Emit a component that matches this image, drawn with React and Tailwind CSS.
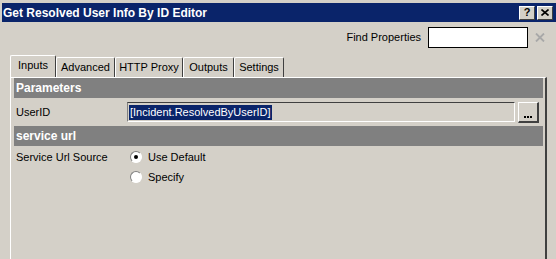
const TitleBtn = ({ children }) => (
  <div className="w-[16px] h-[14px] bg-[#d4d0c8] border-t border-l border-t-white border-l-white border-r border-b border-r-[#404040] border-b-[#404040] flex items-center justify-center text-[11px] font-bold leading-none text-black">
    {children}
  </div>
);

const Tab = ({ label, width, active }) => (
  <div
    className={
      "flex items-center justify-center border-l border-t border-r border-l-white border-t-white border-r-[#404040] rounded-t-[2px] " +
      (active ? "h-[22px] pb-[2px]" : "h-[20px]")
    }
    style={{ width }}
  >
    <span>{label}</span>
  </div>
);

const Radio = ({ checked, label }) => (
  <div className="flex items-center h-[20px]">
    <div className="w-[12px] h-[12px] rounded-full border border-t-[#808080] border-l-[#808080] border-r-white border-b-white bg-white flex items-center justify-center">
      {checked && <div className="w-[4px] h-[4px] rounded-full bg-black" />}
    </div>
    <span className="ml-[6px]">{label}</span>
  </div>
);

export default function App() {
  return (
    <div className="w-[556px] h-[259px] overflow-hidden bg-[#d4d0c8] text-[11px] text-black font-['Liberation_Sans',Arial,sans-serif] flex flex-col">
      <div className="pt-[3px] pl-[2px]">
        <div className="h-[19px] bg-[#0a246a] flex items-center justify-between pl-[1px] pr-[3px]">
          <span className="text-white font-bold text-[12px]">Get Resolved User Info By ID Editor</span>
          <div className="flex gap-[2px]">
            <TitleBtn>?</TitleBtn>
            <TitleBtn>
              <svg width="8" height="7" viewBox="0 0 8 7">
                <path d="M0.5 0.5 L7.5 6.5 M7.5 0.5 L0.5 6.5" stroke="black" strokeWidth="1.6" />
              </svg>
            </TitleBtn>
          </div>
        </div>
      </div>

      <div className="h-[30px] flex items-center justify-end pr-[11px]">
        <span className="mr-[7px]">Find Properties</span>
        <div className="w-[100px] h-[21px] bg-white border border-black" />
        <svg className="ml-[7px]" width="10" height="9" viewBox="0 0 10 9">
          <path d="M1 0.5 L9 8.5 M9 0.5 L1 8.5" stroke="#a8a8a8" strokeWidth="1.8" />
        </svg>
      </div>

      <div className="mt-[3px] pl-[10px] flex items-end h-[22px]">
        <Tab label="Inputs" width={46} active />
        <Tab label="Advanced" width={59} />
        <Tab label="HTTP Proxy" width={68} />
        <Tab label="Outputs" width={51} />
        <Tab label="Settings" width={50} />
      </div>

      <div className="ml-[10px] w-[537px] flex-1 border-l border-t border-l-white border-t-white border-r-2 border-r-[#404040] pl-[3px] pr-[2px]">
        <div className="h-[20px] bg-[#808080] text-white font-bold text-[12px] flex items-center pl-[2px]">Parameters</div>
        <div className="h-[28px] flex items-center">
          <span className="w-[113px] pl-[2px]">UserID</span>
          <div className="w-[388px] h-[20px] bg-[#d4d0c8] border-t border-l border-t-[#404040] border-l-[#808080] border-r border-b border-r-white border-b-white flex items-center pl-[1px]">
            <span className="bg-[#0a246a] text-white leading-[15px] px-[1px]">[Incident.ResolvedByUserID]</span>
          </div>
          <div className="ml-[3px] w-[21px] h-[21px] border-t border-l border-t-white border-l-white border-r-2 border-b-2 border-r-[#404040] border-b-[#404040] flex items-end justify-center pb-[3px]">
            <div className="flex gap-[1px]">
              <div className="w-[2px] h-[2px] bg-black" />
              <div className="w-[2px] h-[2px] bg-black" />
              <div className="w-[2px] h-[2px] bg-black" />
            </div>
          </div>
        </div>
        <div className="h-[20px] bg-[#808080] text-white font-bold text-[12px] flex items-center pl-[2px]">service url</div>
        <div className="flex pt-[1px]">
          <span className="w-[116px] pl-[2px] leading-[20px]">Service Url Source</span>
          <div className="flex flex-col">
            <Radio checked label="Use Default" />
            <Radio label="Specify" />
          </div>
        </div>
      </div>
    </div>
  );
}
